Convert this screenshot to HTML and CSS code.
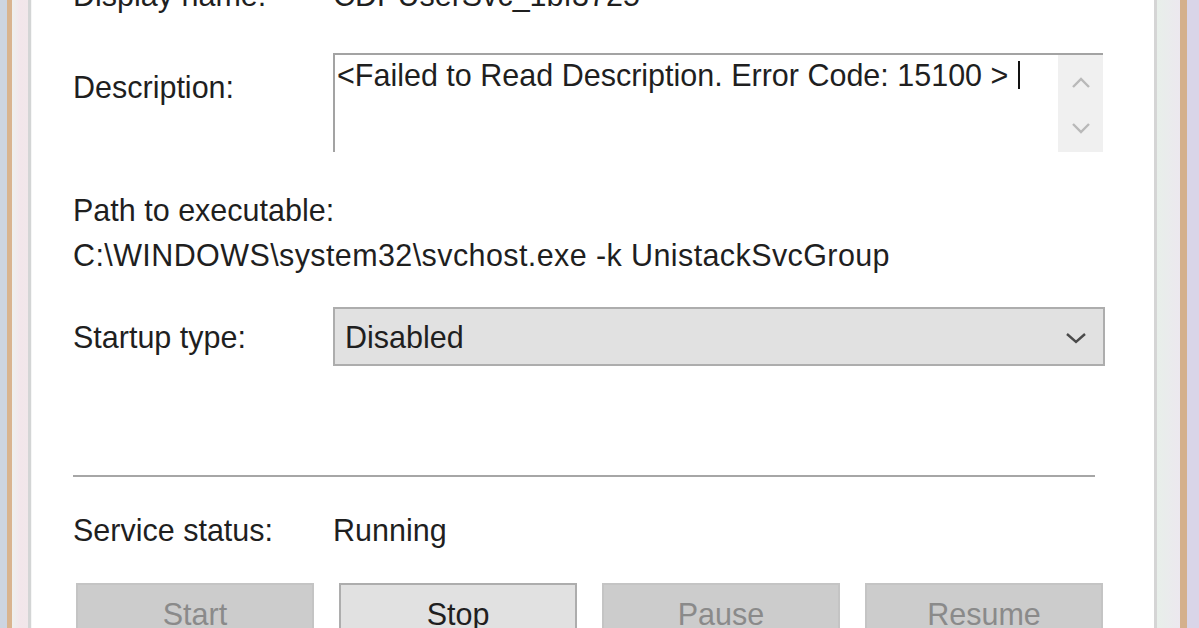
FILE: index.html
```html
<!DOCTYPE html>
<html lang="en">
<head>
<meta charset="utf-8">
<title>Service Properties</title>
<link rel="stylesheet" href="styles.css">
</head>
<body>
<div class="window">
  <div class="frame-left"></div>
  <div class="dialog">
    <div class="row row-display">
      <span class="label">Display name:</span>
      <span class="value">CDPUserSvc_1bf3725</span>
    </div>
    <div class="row row-desc">
      <span class="label label-desc">Description:</span>
      <div class="textbox">
        <div class="tb-text">&lt;Failed to Read Description. Error Code: 15100 &gt;<span class="caret"></span></div>
        <div class="tb-scroll">
          <svg class="chev" width="20" height="12" viewBox="0 0 20 12"><path d="M2 10 L10 2 L18 10" fill="none" stroke="#b9b9b9" stroke-width="2.4"/></svg>
          <svg class="chev" width="20" height="12" viewBox="0 0 20 12"><path d="M2 2 L10 10 L18 2" fill="none" stroke="#b9b9b9" stroke-width="2.4"/></svg>
        </div>
      </div>
    </div>
    <div class="path-block">
      <div>Path to executable:</div>
      <div class="path">C:\WINDOWS\system32\svchost.exe -k UnistackSvcGroup</div>
    </div>
    <div class="row row-startup">
      <span class="label">Startup type:</span>
      <div class="select">
        <span>Disabled</span>
        <svg width="22" height="12" viewBox="0 0 22 12"><path d="M2 2 L11 10 L20 2" fill="none" stroke="#4a4a4a" stroke-width="2.4"/></svg>
      </div>
    </div>
    <div class="sep"></div>
    <div class="row row-status">
      <span class="label">Service status:</span>
      <span class="value">Running</span>
    </div>
    <div class="buttons">
      <div class="btn disabled">Start</div>
      <div class="btn">Stop</div>
      <div class="btn disabled">Pause</div>
      <div class="btn disabled">Resume</div>
    </div>
  </div>
  <div class="frame-right"></div>
</div>
</body>
</html>
```
FILE: styles.css
```css
html, body {
  margin: 0;
  padding: 0;
  height: 628px;
  overflow: hidden;
  background: #ffffff;
}

body {
  font-family: "Liberation Sans", Arial, sans-serif;
  font-size: 30.5px;
  color: #1f1f1f;
}

.window {
  display: flex;
  height: 628px;
}

.frame-left {
  width: 32px;
  flex: none;
  background: linear-gradient(to right,
    #cdd5e1 0, #cdd5e1 7px,
    #d9b48f 7px, #d9b48f 12px,
    #eef0ee 12px, #f2e6ea 20px, #f1e7ea 28px,
    #d3d5d5 28px, #d3d5d5 31px,
    #f6f6f6 31px, #f6f6f6 32px);
}

.frame-right {
  width: 45px;
  flex: none;
  background: linear-gradient(to right,
    #d5d5d5 0, #d5d5d5 3px,
    #e8efea 3px, #ece8ef 26px,
    #d4b08c 26px, #d4b08c 33px,
    #d9d5e8 33px, #d9d5e8 45px);
}

.dialog {
  flex: 1;
  display: flex;
  flex-direction: column;
  padding: 0 49px 0 41px;
}

.dialog > * {
  flex-shrink: 0;
}

.row {
  display: grid;
  grid-template-columns: 260px 1fr;
  line-height: 36px;
}

.row-display {
  margin-top: -23px;
  height: 36px;
}

.row-desc {
  margin-top: 40px;
  align-items: start;
}

.label-desc {
  padding-top: 16px;
}

.textbox {
  display: flex;
  height: 97px;
  margin-right: 2px;
  border-top: 2px solid #a3a3a3;
  border-left: 2px solid #a3a3a3;
}

.tb-text {
  flex: 1;
  padding: 2px 0 0 2px;
  white-space: nowrap;
  display: flex;
  align-items: flex-start;
}

.caret {
  display: inline-block;
  width: 2px;
  height: 28px;
  margin: 4px 0 0 10px;
  background: #111111;
}

.tb-scroll {
  width: 45px;
  background: #f0f0f0;
  display: flex;
  flex-direction: column;
  align-items: center;
  justify-content: space-between;
  padding: 22px 0 18px;
  box-sizing: border-box;
}

.path-block {
  margin-top: 36px;
  line-height: 45px;
}

.path {
  letter-spacing: 0.4px;
}

.row-startup {
  margin-top: 29px;
  align-items: center;
}

.select {
  height: 59px;
  box-sizing: border-box;
  border: 2px solid #adadad;
  background: #e1e1e1;
  display: flex;
  align-items: center;
  justify-content: space-between;
  padding: 0 16px 0 10px;
}

.select svg {
  margin-top: 2px;
}

.sep {
  margin-top: 109px;
  margin-right: 10px;
  height: 2px;
  background: #a6a6a6;
}

.row-status {
  margin-top: 35px;
}

.buttons {
  margin: 35px 2px 0 3px;
  display: grid;
  grid-template-columns: repeat(4, 1fr);
  column-gap: 25px;
}

.btn {
  height: 60px;
  box-sizing: border-box;
  border: 2px solid #adadad;
  background: #e1e1e1;
  display: flex;
  justify-content: center;
  padding-top: 11px;
  line-height: 36px;
  color: #1f1f1f;
}

.btn.disabled {
  background: #cccccc;
  border-color: #c4c4c4;
  color: #8a8a8a;
}
```
